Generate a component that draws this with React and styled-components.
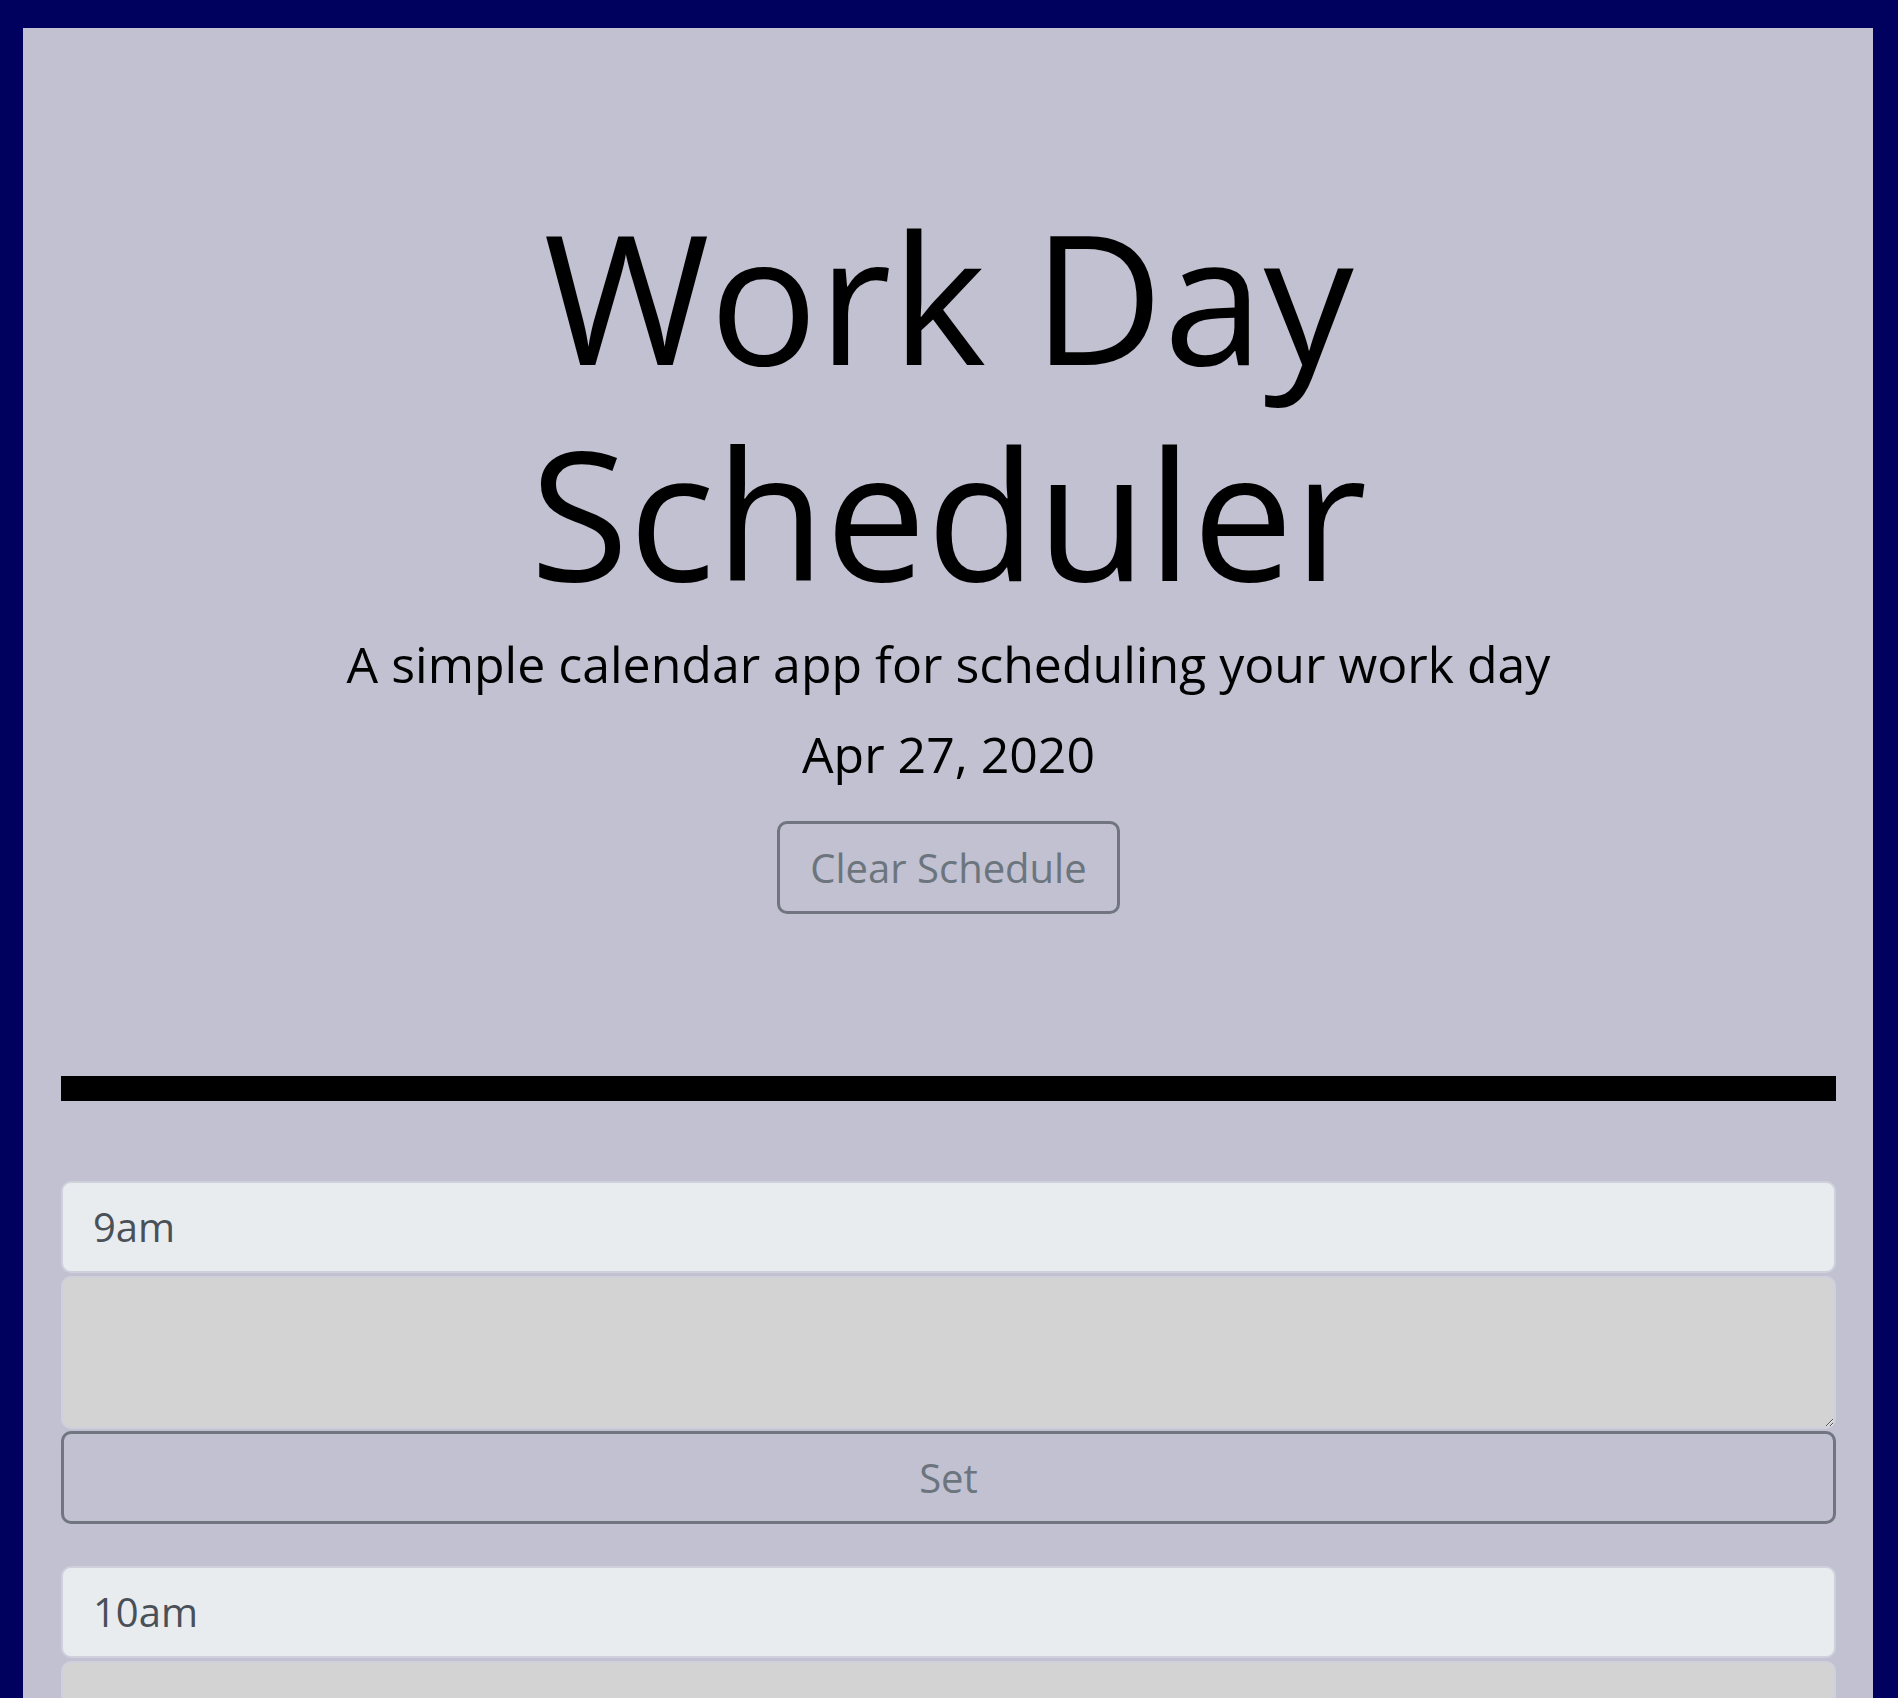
import React from "react";
import styled, { createGlobalStyle } from "styled-components";

const hours = ["9am", "10am", "11am", "12pm", "1pm", "2pm", "3pm", "4pm", "5pm"];

const GlobalStyle = createGlobalStyle`
	* {
		box-sizing: border-box;
	}

	body {
		margin: 0;
		background-color: #00005e;
		font-family: "Open Sans", "Liberation Sans", sans-serif;
		color: #000;
	}
`;

const App = () => {
	return (
		<>
			<GlobalStyle />
			<Page>
				<Panel>
					<Header>
						<Title>Work Day Scheduler</Title>
						<Lead>A simple calendar app for scheduling your work day</Lead>
						<CurrentDay>Apr 27, 2020</CurrentDay>
						<OutlineButton type="button">Clear Schedule</OutlineButton>
					</Header>
					<Divider />
					<Schedule>
						{hours.map((hour) => (
							<Row key={hour}>
								<HourLabel>{hour}</HourLabel>
								<Entry rows={2} />
								<OutlineButton type="button" $block>
									Set
								</OutlineButton>
							</Row>
						))}
					</Schedule>
				</Panel>
			</Page>
		</>
	);
};

const Page = styled.div`
	padding: 28px 25px 28px 23px;
`;

const Panel = styled.main`
	background-color: #c1c1d2;
	padding: 0 37px 40px 38px;
`;

const Header = styled.header`
	display: flex;
	flex-direction: column;
	align-items: center;
	text-align: center;
	padding: 160px 0 162px;
`;

const Title = styled.h1`
	margin: 0 0 7px;
	max-width: 1100px;
	font-size: 180px;
	font-weight: 400;
	line-height: 1.2;
`;

const Lead = styled.p`
	margin: 0 0 15px;
	font-size: 50px;
	font-weight: 400;
	line-height: 1.5;
`;

const CurrentDay = styled.p`
	margin: 0 0 29px;
	font-size: 50px;
	line-height: 1.5;
`;

const OutlineButton = styled.button`
	display: block;
	width: ${(props) => (props.$block ? "100%" : "auto")};
	margin-top: ${(props) => (props.$block ? "2px" : "0")};
	padding: 13.5px 30px;
	border: 3px solid #70757f;
	border-radius: 10px;
	background: transparent;
	color: #6c757d;
	font-family: inherit;
	font-size: 40px;
	line-height: 1.5;
	cursor: pointer;
`;

const Divider = styled.hr`
	margin: 0;
	height: 25px;
	border: 0;
	background-color: #000;
`;

const Schedule = styled.section`
	display: flex;
	flex-direction: column;
	gap: 42px;
	padding-top: 80px;
`;

const Row = styled.div`
	display: flex;
	flex-direction: column;
`;

const HourLabel = styled.div`
	padding: 14px 30px;
	border: 2px solid #ced1dc;
	border-radius: 10px;
	background-color: #e9ecef;
	color: #495057;
	font-size: 40px;
	line-height: 1.5;
`;

const Entry = styled.textarea`
	display: block;
	width: 100%;
	height: 153px;
	margin-top: 3px;
	padding: 15px 30px;
	border: 2px solid #ced1dc;
	border-radius: 10px;
	background-color: #d3d3d3;
	color: #495057;
	font-family: inherit;
	font-size: 40px;
	line-height: 1.5;
`;

export default App;
